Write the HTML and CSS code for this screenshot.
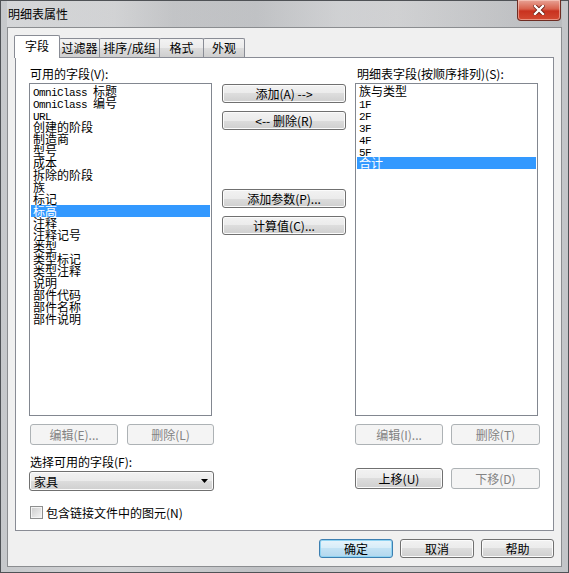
FILE: index.html
```html
<!DOCTYPE html>
<html lang="zh-CN">
<head>
    <meta charset="UTF-8">
    <title>明细表属性</title>
    <link rel="stylesheet" href="styles.css">
</head>
<body>
<div class="window">
    <div class="titlebar">
        <span class="title">明细表属性</span>
        <div class="close">
            <svg width="12" height="10" viewBox="0 0 12 10">
                <path d="M2 1 L10 9 M10 1 L2 9" stroke="#6b1d12" stroke-width="4" stroke-linecap="square"/>
                <path d="M2 1 L10 9 M10 1 L2 9" stroke="#fff" stroke-width="2.4" stroke-linecap="square"/>
            </svg>
        </div>
    </div>
    <div class="client">
        <div class="tabs">
            <div class="tab active" style="width: 46px">字段</div>
            <div class="tab" style="width: 41px">过滤器</div>
            <div class="tab" style="width: 61px">排序/成组</div>
            <div class="tab" style="width: 45px">格式</div>
            <div class="tab" style="width: 42px">外观</div>
        </div>
        <div class="panel">
            <div class="col">
                <div class="label">可用的字段(V):</div>
                <ul class="list">
                    <li><span class="en">OmniClass&nbsp;</span>标题</li>
                    <li><span class="en">OmniClass&nbsp;</span>编号</li>
                    <li><span class="en">URL</span></li>
                    <li>创建的阶段</li>
                    <li>制造商</li>
                    <li>型号</li>
                    <li>成本</li>
                    <li>拆除的阶段</li>
                    <li>族</li>
                    <li>标记</li>
                    <li class="selected">标高</li>
                    <li>注释</li>
                    <li>注释记号</li>
                    <li>类型</li>
                    <li>类型标记</li>
                    <li>类型注释</li>
                    <li>说明</li>
                    <li>部件代码</li>
                    <li>部件名称</li>
                    <li>部件说明</li>
                </ul>
                <div class="btn-row">
                    <button class="btn" disabled>编辑(E)...</button>
                    <button class="btn" disabled>删除(L)</button>
                </div>
                <div class="label pick">选择可用的字段(F):</div>
                <div class="combo">
                    <span>家具</span>
                    <svg width="7" height="4" viewBox="0 0 7 4"><path d="M0 0 H7 L3.5 4 Z" fill="#000"/></svg>
                </div>
                <label class="check"><span class="box"></span>包含链接文件中的图元(N)</label>
            </div>

            <div class="col middle">
                <button class="btn">添加(A) --&gt;</button>
                <button class="btn gap-s">&lt;-- 删除(R)</button>
                <button class="btn gap-l">添加参数(P)...</button>
                <button class="btn gap-s">计算值(C)...</button>
            </div>

            <div class="col">
                <div class="label indent">明细表字段(按顺序排列)(S):</div>
                <ul class="list indent">
                    <li>族与类型</li>
                    <li><span class="en">1F</span></li>
                    <li><span class="en">2F</span></li>
                    <li><span class="en">3F</span></li>
                    <li><span class="en">4F</span></li>
                    <li><span class="en">5F</span></li>
                    <li class="selected">合计</li>
                </ul>
                <div class="btn-row right">
                    <button class="btn" disabled>编辑(I)...</button>
                    <button class="btn" disabled>删除(T)</button>
                </div>
                <div class="btn-row right move">
                    <button class="btn">上移(U)</button>
                    <button class="btn" disabled>下移(D)</button>
                </div>
            </div>
        </div>
        <div class="footer">
            <button class="btn default">确定</button>
            <button class="btn">取消</button>
            <button class="btn narrow">帮助</button>
        </div>
    </div>
</div>
</body>
</html>
```

FILE: styles.css
```css
* {
    box-sizing: border-box;
}
body {
    margin: 0;
    font-family: "Noto Sans CJK SC", sans-serif;
    font-size: 12px;
    color: #000;
}
.window {
    width: 569px;
    height: 573px;
    border: 1px solid #4f5256;
    padding: 0 6px 5px;
    background: linear-gradient(to right, #c6c8cb, #d3d4d6 20%, #bfc1c4 45%, #cdced0 70%, #c3c5c8);
    display: flex;
    flex-direction: column;
}
.titlebar {
    height: 26px;
    display: flex;
    justify-content: space-between;
    background: linear-gradient(to right, rgba(255,255,255,0.25), rgba(0,0,0,0.04) 30%, rgba(255,255,255,0.15) 60%, rgba(0,0,0,0.05));
}
.title {
    padding-left: 1px;
    line-height: 26px;
}
.close {
    width: 44px;
    height: 21px;
    margin: -1px 1px 0 0;
    border: 1px solid #6e2c22;
    border-top: none;
    border-radius: 0 0 4px 4px;
    background: linear-gradient(#e8a396, #d8614c 45%, #c9321f 55%, #d34a32);
    box-shadow: inset 0 0 0 1px rgba(255, 220, 210, 0.5);
    display: flex;
    align-items: center;
    justify-content: center;
}
.client {
    height: 540px;
    border: 1px solid #8b8d90;
    background: #f0f0f0;
    padding: 7px 7px 0 6px;
}
.tabs {
    display: flex;
    align-items: flex-end;
    height: 22px;
}
.tab {
    height: 19px;
    border: 1px solid #898c95;
    border-bottom: none;
    margin-right: -1px;
    border-radius: 2px 2px 0 0;
    background: linear-gradient(#f3f3f3, #ebebeb 50%, #dddddd 50%, #cfcfcf);
    text-align: center;
    line-height: 18px;
}
.tab.active {
    position: relative;
    z-index: 1;
    height: 23px;
    margin-bottom: -1px;
    background: #fff;
    line-height: 20px;
}
.panel {
    margin-left: 1px;
    height: 474px;
    border: 1px solid #898c95;
    background: #fff;
    display: flex;
    padding: 9px 0 0 13px;
}
.col {
    width: 185px;
    display: flex;
    flex-direction: column;
}
.label {
    line-height: 14px;
    height: 14px;
    padding-left: 1px;
    margin-bottom: 2px;
}
.indent {
    margin-left: 2px;
}
.label.indent {
    padding-left: 0;
}
.list {
    list-style: none;
    margin: 0;
    padding: 1px;
    width: 183px;
    height: 333px;
    border: 1px solid #828790;
    overflow: hidden;
}
.list li {
    height: 12px;
    line-height: 12px;
    padding-left: 2px;
    white-space: nowrap;
}
.list li.selected {
    background: #3399ff;
    color: #fff;
}
.en {
    font-family: "Liberation Mono", monospace;
    font-size: 11px;
    letter-spacing: -0.6px;
}
.btn {
    font: inherit;
    color: #000;
    height: 21px;
    padding: 0;
    border: 1px solid #707070;
    border-radius: 3px;
    background: linear-gradient(#f2f2f2, #ebebeb 50%, #dddddd 50%, #cfcfcf);
    box-shadow: inset 0 0 0 1px #fbfbfb;
    line-height: 18px;
}
.btn:disabled {
    border-color: #adb2b5;
    background: #f4f4f4;
    color: #838383;
    box-shadow: none;
}
.btn.default {
    border-color: #3c7fb1;
    background: linear-gradient(#e7f4fb, #d6ecf8 50%, #c2e2f4 50%, #b3d7ee);
    box-shadow: inset 0 0 0 1px #8fd3f2;
}
.btn-row {
    display: flex;
    justify-content: space-between;
    margin-top: 8px;
    padding-left: 1px;
}
.btn-row .btn {
    width: 87px;
}
.btn-row .btn:first-child {
    width: 88px;
}
.btn-row.right {
    padding-left: 0;
    width: 185px;
}
.btn-row.right .btn {
    width: 89px;
}
.btn-row.right .btn:first-child {
    width: 88px;
}
.btn-row.move {
    margin-top: 23px;
}
.pick {
    margin-top: 10px;
}
.combo {
    height: 20px;
    border: 1px solid #707070;
    border-radius: 3px;
    background: linear-gradient(#f2f2f2, #ebebeb 50%, #dddddd 50%, #cfcfcf);
    box-shadow: inset 0 0 0 1px #fbfbfb;
    display: flex;
    align-items: center;
    justify-content: space-between;
    padding: 0 5px 0 4px;
}
.check {
    display: flex;
    align-items: center;
    margin-top: 14px;
    margin-left: 1px;
    height: 14px;
}
.box {
    width: 13px;
    height: 13px;
    margin-right: 3px;
    border: 1px solid #8e8f8f;
    background: linear-gradient(135deg, #cbcbcb, #f6f6f6);
    box-shadow: inset 0 0 0 1px #f4f4f4;
}
.middle {
    width: 124px;
    margin: 0 9px 0 8px;
    padding-top: 17px;
}
.middle .btn {
    height: 19px;
    line-height: 16px;
}
.gap-s {
    margin-top: 8px;
}
.gap-l {
    margin-top: 59px;
}
.footer {
    display: flex;
    justify-content: flex-end;
    gap: 7px;
    margin-top: 8px;
}
.footer .btn {
    width: 74px;
    height: 19px;
    line-height: 16px;
}
.footer .btn.narrow {
    width: 73px;
}
```
